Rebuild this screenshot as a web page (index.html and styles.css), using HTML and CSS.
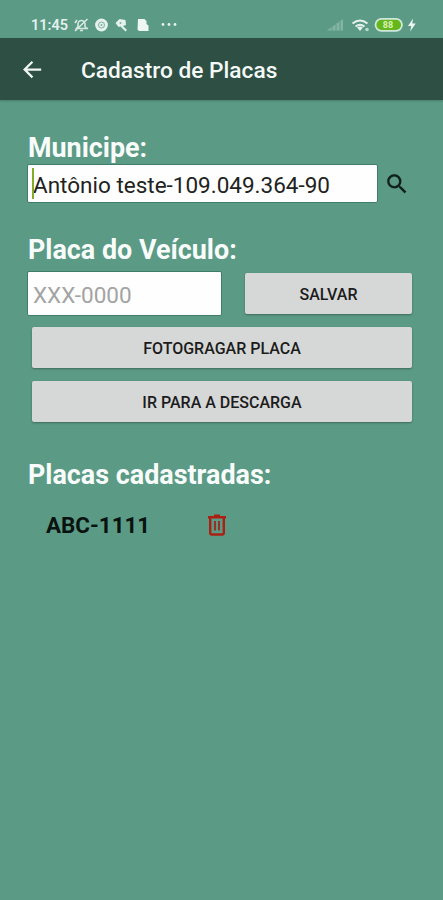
FILE: index.html
```html
<!DOCTYPE html>
<html lang="pt-BR">
<head>
    <meta charset="UTF-8">
    <meta name="viewport" content="width=device-width, initial-scale=1.0">
    <title>Cadastro de Placas</title>
    <link rel="stylesheet" href="styles.css">
</head>
<body>
    <!-- Status bar -->
    <div class="status-bar">
        <span class="clock">11:45</span>
        <svg class="status-left" width="112" height="16" viewBox="0 0 112 16">
            <!-- Muted bell -->
            <g fill="none" stroke="#d5e9e1" stroke-width="1.600">
                <path d="M3.500 11.500h10l-1.500-2V7a3.500 3.500 0 0 0-7 0v2.500zM7 13.500h3M2 14L14.500 2M2 6l2-3M13 11l2 .5"/>
            </g>
            <circle cx="28.500" cy="8" r="6.400" fill="#e4f1ec"/>
            <circle cx="28.500" cy="8" r="3" fill="none" stroke="#7fb09f" stroke-width="1"/>
            <circle cx="28.500" cy="8" r="1" fill="#7fb09f"/>
            <path d="M42.500 6l4-4 6 1 .5 5-3 1 4 4-1.500 1.500-5-5-2 .5z" fill="#e4f1ec"/>
            <circle cx="47.500" cy="6" r="1" fill="#7fb09f"/>
            <path d="M65 2h6.500l2 2v3l2 1.500V14H66l-1.500-1.500z" fill="#eef7f3"/>
            <g fill="#e4f1ec">
                <circle cx="90" cy="7.500" r="1.400"/>
                <circle cx="96" cy="7.500" r="1.400"/>
                <circle cx="102" cy="7.500" r="1.400"/>
            </g>
        </svg>
        <svg class="status-right" width="90" height="16" viewBox="0 0 90 16">
            <path d="M1 13.500L17 2v11.500z" fill="#83b5a4"/>
            <path d="M6 10v3.500M10 7v6.500M14 4v9.500" stroke="#5b9a85" stroke-width="1"/>
            <g fill="none" stroke="#e4f1ec" stroke-width="2">
                <path d="M26.500 6.500q7.500-6 15 0M29.500 9.500q4.500-3.600 9 0"/>
            </g>
            <path d="M31 10.500q3-2 6 0l-3 3.500z" fill="#e4f1ec"/>
            <circle cx="41" cy="12.500" r="1.800" fill="#b9d8cc"/>
            <rect x="49.500" y="1.800" width="26.500" height="12" rx="6" fill="#64b81c" stroke="#d0e7dc" stroke-width="1.800"/>
            <text class="battery-text" x="62" y="11.200" text-anchor="middle">88</text>
            <path d="M87 1.500l-5 7.500h3.200l-1 5.500 5.500-8h-3.400z" fill="#eef7f3"/>
        </svg>
    </div>

    <!-- App bar -->
    <header class="app-bar">
        <svg class="back-icon" width="24" height="24" viewBox="0 0 24 24">
            <path d="M22 11.500H4M12.500 3L4 11.500l8.500 8.500" fill="none" stroke="#eef5f2" stroke-width="2.500"/>
        </svg>
        <h1 class="app-title">Cadastro de Placas</h1>
    </header>

    <main class="container">
        <label class="title" for="municipe">Municipe:</label>
        <div class="field-row">
            <div class="input-wrapper">
                <span class="caret"></span>
                <input type="text" id="municipe" class="boxy" value="Antônio teste-109.049.364-90">
            </div>
            <svg class="search-icon" width="26" height="26" viewBox="0 0 24 24">
                <path fill="#10201a" stroke="#10201a" stroke-width=".2" d="M15.500 14h-.79l-.28-.27A6.471 6.471 0 0 0 16 9.500 6.500 6.500 0 1 0 9.500 16c1.610 0 3.090-.59 4.230-1.570l.27.28v.79l5 4.990L20.490 19l-4.990-5zm-6 0C7.010 14 5 11.990 5 9.500S7.010 5 9.500 5 14 7.010 14 9.500 11.990 14 9.500 14z"/>
            </svg>
        </div>

        <label class="title title-placa" for="placa">Placa do Veículo:</label>
        <div class="placa-row">
            <input type="text" id="placa" class="boxy boxy-placa" placeholder="XXX-0000">
            <button type="button" class="btn btn-save">SALVAR</button>
        </div>
        <button type="button" class="btn btn-wide">FOTOGRAGAR PLACA</button>
        <button type="button" class="btn btn-wide">IR PARA A DESCARGA</button>

        <h2 class="title title-list">Placas cadastradas:</h2>
        <div class="plate-item">
            <span class="plate-number">ABC-1111</span>
            <svg class="trash-icon" width="20" height="22" viewBox="0 0 20 22">
                <path d="M1 3.200h18M7 1.800h6M3.200 3.500v15.300q0 1.700 1.700 1.700h10.200q1.700 0 1.700-1.700V3.500" fill="none" stroke="#ab2013" stroke-width="2.400"/>
                <path d="M8 7v9.500M12 7v9.500" stroke="#9a2c20" stroke-width="1.900"/>
            </svg>
        </div>
    </main>
</body>
</html>
```

FILE: styles.css
```css
* { box-sizing: border-box; }
body { margin: 0; min-height: 900px; background-color: #5b9a85; font-family: Roboto, "Liberation Sans", sans-serif; }

.status-bar { display: flex; align-items: center; height: 38px; padding: 11px 27px 0 31px; }
.clock { width: 42px; padding-top: 2px; font-size: 14.5px; font-weight: 600; line-height: 20px; color: #e4f1ec; }
.status-right { margin-left: auto; }
.battery-text { font-size: 9px; font-weight: 700; fill: #d9f0b4; }

.app-bar { display: flex; align-items: center; height: 62px; padding: 2px 21px 0; background-color: #2d4f44; box-shadow: 0 1px 2px rgba(0, 0, 0, 0.2); }
.back-icon { width: 22px; height: 22px; }
.app-title { margin: 2px 0 0 38px; font-size: 22.7px; font-weight: 500; line-height: 30px; color: #f4faf7; white-space: nowrap; }

.container { padding: 31px 31px 0 27px; }
.title { display: block; height: 32px; margin: 0; padding: 1px 0 0 1px; font-size: 26.9px; font-weight: 700; line-height: 32px; color: #f8fdfb; white-space: nowrap; }
.title-placa { margin-top: 30px; margin-bottom: 6px; }
.title-list { margin-top: 36px; }

.field-row { display: flex; align-items: center; margin-top: 1px; }
.input-wrapper { position: relative; width: 351px; }
.caret { position: absolute; left: 5px; top: 4px; width: 2px; height: 31px; background-color: #83ad28; }
.boxy { display: block; width: 100%; height: 39px; padding: 2px 0 0 5px; border: 1px solid #3f7d69; border-radius: 2px; background-color: #fefefe; font-family: inherit; font-size: 22.5px; color: #222; outline: none; }
.boxy::placeholder { color: #a3a3a3; opacity: 1; }
.search-icon { margin-left: 6px; }

.placa-row { display: flex; align-items: center; justify-content: space-between; }
.boxy-placa { width: 195px; height: 45px; }
.btn { display: block; padding: 1px 0 0; border: none; border-radius: 2px; background-color: #d6d8d7; box-shadow: 0 1px 2px rgba(0, 0, 0, 0.3); font-family: inherit; font-size: 16px; font-weight: 500; color: #1c1c1c; }
.btn-save { width: 167px; height: 41px; }
.btn-wide { width: 380px; height: 41px; margin: 11px 0 0 5px; }
.btn-wide + .btn-wide { margin-top: 13px; }

.plate-item { display: flex; align-items: center; height: 30px; margin-top: 20px; padding-left: 19px; }
.plate-number { width: 161px; font-size: 22.4px; font-weight: 700; line-height: 30px; color: #08120e; }
```
